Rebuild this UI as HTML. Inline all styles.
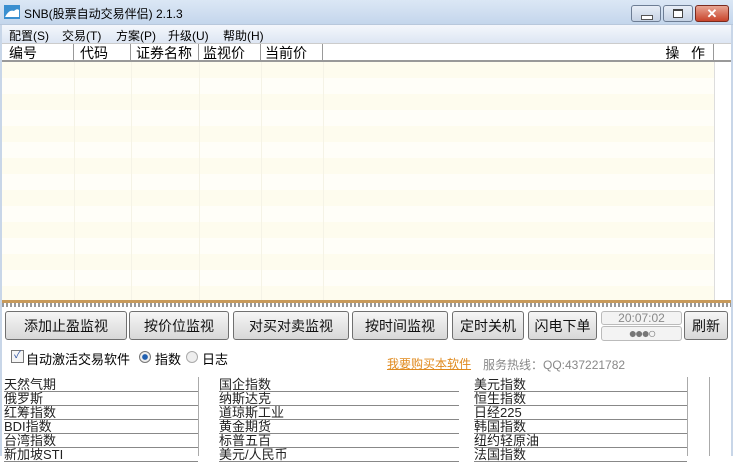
<!DOCTYPE html><html><head><meta charset="utf-8"><style>
body{margin:0;width:733px;height:456px;overflow:hidden;background:#fff;font-family:"Liberation Sans","Noto Sans CJK SC",sans-serif;font-size:12px;position:relative}
.a{position:absolute}
.btn{position:absolute;top:311px;height:29px;border:1px solid #707070;border-radius:3px;background:linear-gradient(#f6f6f6,#e6e6e6 50%,#d8d8d8);text-align:center;line-height:29px;font-size:14px;color:#111;box-sizing:border-box}
.col{position:absolute;top:44px;height:18px;border-right:1px solid #999;font-size:14px;line-height:18px;padding-left:6px;box-sizing:border-box}
.li{position:absolute;font-size:13px;line-height:13px;height:14px;border-bottom:1px solid #888;color:#222;box-sizing:border-box}
</style></head><body>
<div class="a" style="left:0;top:0;width:733px;height:24px;background:linear-gradient(#dbe7f5,#c4d6ec);border-bottom:1px solid #b8c8dc"></div>
<svg class="a" style="left:4px;top:5px" width="16" height="14"><rect width="16" height="14" fill="#3a8fd0"/><path d="M1 12 Q5 4 10 6 Q13 3 15 5 L15 12Z" fill="#fff"/></svg>
<div class="a" style="left:24px;top:5px;font-size:12px">SNB(股票自动交易伴侣) 2.1.3</div>
<div class="a" style="left:631px;top:5px;width:30px;height:17px;border:1px solid #6d7d94;border-radius:3px;background:linear-gradient(#e8eef7,#c5d2e4);box-sizing:border-box"><div class="a" style="left:9px;top:9px;width:10px;height:3px;background:#fff;border:1px solid #555"></div></div>
<div class="a" style="left:663px;top:5px;width:30px;height:17px;border:1px solid #6d7d94;border-radius:3px;background:linear-gradient(#e8eef7,#c5d2e4);box-sizing:border-box"><div class="a" style="left:9px;top:3px;width:8px;height:6px;border:1px solid #444;border-top-width:2px;background:#fff"></div></div>
<div class="a" style="left:695px;top:5px;width:34px;height:17px;border:1px solid #7a2a1e;border-radius:3px;background:linear-gradient(#e8a593,#c9442b);color:#fff;text-align:center;font-weight:bold;line-height:15px;font-size:13px;box-sizing:border-box">✕</div>
<div class="a" style="left:0;top:25px;width:733px;height:18px;background:linear-gradient(#f4f7fc,#dde6f3)"></div>
<div class="a" style="left:9px;top:27px">配置(S)</div>
<div class="a" style="left:62px;top:27px">交易(T)</div>
<div class="a" style="left:116px;top:27px">方案(P)</div>
<div class="a" style="left:168px;top:27px">升级(U)</div>
<div class="a" style="left:223px;top:27px">帮助(H)</div>
<div class="a" style="left:0;top:43px;width:733px;height:19px;background:#fff;border-bottom:2px solid #999;border-top:1px solid #ccc;box-sizing:border-box"></div>
<div class="col" style="left:2px;width:72px;padding-left:7px">编号</div>
<div class="col" style="left:74px;width:57px">代码</div>
<div class="col" style="left:131px;width:68px;padding-left:5px">证券名称</div>
<div class="col" style="left:199px;width:62px;padding-left:4px">监视价</div>
<div class="col" style="left:261px;width:62px;padding-left:4px">当前价</div>
<div class="col" style="left:323px;width:391px;text-align:right;padding-right:8px">操&nbsp;&nbsp;&nbsp;作</div>
<div class="a" style="left:2px;top:62px;width:712px;height:238px;background:repeating-linear-gradient(#fefcee 0 16px,#fffef8 16px 32px)"></div>
<div class="a" style="left:74px;top:62px;width:1px;height:238px;background:#f5f3e6"></div>
<div class="a" style="left:131px;top:62px;width:1px;height:238px;background:#f5f3e6"></div>
<div class="a" style="left:199px;top:62px;width:1px;height:238px;background:#f5f3e6"></div>
<div class="a" style="left:261px;top:62px;width:1px;height:238px;background:#f5f3e6"></div>
<div class="a" style="left:323px;top:62px;width:1px;height:238px;background:#f5f3e6"></div>
<div class="a" style="left:714px;top:62px;width:1px;height:238px;background:#ddd"></div>
<div class="a" style="left:0;top:25px;width:2px;height:431px;background:#c8d6e8"></div>
<div class="a" style="left:731px;top:25px;width:2px;height:431px;background:#c8d6e8"></div>
<div class="a" style="left:2px;top:300px;width:729px;height:3px;background:#c89a5a"></div>
<div class="a" style="left:2px;top:303px;width:729px;height:4px;background:repeating-linear-gradient(90deg,#999 0 2px,#fff 2px 4px)"></div>
<div class="btn" style="left:5px;width:122px">添加止盈监视</div>
<div class="btn" style="left:129px;width:100px">按价位监视</div>
<div class="btn" style="left:233px;width:116px">对买对卖监视</div>
<div class="btn" style="left:352px;width:96px">按时间监视</div>
<div class="btn" style="left:452px;width:72px">定时关机</div>
<div class="btn" style="left:528px;width:69px">闪电下单</div>
<div class="a" style="left:601px;top:311px;width:81px;height:14px;border:1px solid #bbb;border-radius:3px;background:#f3f3f3;color:#888;text-align:center;font-size:12px;line-height:13px;box-sizing:border-box">20:07:02</div>
<div class="a" style="left:601px;top:326px;width:81px;height:15px;border:1px solid #bbb;border-radius:3px;background:#f3f3f3;text-align:center;color:#777;font-size:14px;line-height:13px;box-sizing:border-box;letter-spacing:-2px">●●●○</div>
<div class="btn" style="left:684px;width:44px">刷新</div>
<div class="a" style="left:11px;top:350px;width:11px;height:11px;border:1px solid #777;background:#f5f5f5;font-size:10px;line-height:10px;color:#2a4fa0;text-align:center">✓</div>
<div class="a" style="left:26px;top:349px;font-size:13px">自动激活交易软件</div>
<div class="a" style="left:139px;top:351px;width:10px;height:10px;border-radius:50%;border:1px solid #777;background:radial-gradient(#1f5fb0 35%,#eee 45%)"></div>
<div class="a" style="left:155px;top:349px;font-size:13px">指数</div>
<div class="a" style="left:186px;top:351px;width:10px;height:10px;border-radius:50%;border:1px solid #aaa;background:#eee"></div>
<div class="a" style="left:202px;top:349px;font-size:13px">日志</div>
<div class="a" style="left:387px;top:355px;font-size:12px;color:#e08a1e;text-decoration:underline">我要购买本软件</div>
<div class="a" style="left:483px;top:356px;font-size:12px;color:#888">服务热线：QQ:437221782</div>
<div class="a" style="left:198px;top:377px;width:1px;height:79px;background:#aaa"></div>
<div class="a" style="left:687px;top:377px;width:1px;height:79px;background:#aaa"></div>
<div class="a" style="left:709px;top:377px;width:1px;height:79px;background:#aaa"></div>
<div class="li" style="left:4px;top:378px;width:194px">天然气期</div>
<div class="li" style="left:4px;top:392px;width:194px">俄罗斯</div>
<div class="li" style="left:4px;top:406px;width:194px">红筹指数</div>
<div class="li" style="left:4px;top:420px;width:194px">BDI指数</div>
<div class="li" style="left:4px;top:434px;width:194px">台湾指数</div>
<div class="li" style="left:4px;top:448px;width:194px">新加坡STI</div>
<div class="li" style="left:219px;top:378px;width:240px">国企指数</div>
<div class="li" style="left:219px;top:392px;width:240px">纳斯达克</div>
<div class="li" style="left:219px;top:406px;width:240px">道琼斯工业</div>
<div class="li" style="left:219px;top:420px;width:240px">黄金期货</div>
<div class="li" style="left:219px;top:434px;width:240px">标普五百</div>
<div class="li" style="left:219px;top:448px;width:240px">美元/人民币</div>
<div class="li" style="left:474px;top:378px;width:213px">美元指数</div>
<div class="li" style="left:474px;top:392px;width:213px">恒生指数</div>
<div class="li" style="left:474px;top:406px;width:213px">日经225</div>
<div class="li" style="left:474px;top:420px;width:213px">韩国指数</div>
<div class="li" style="left:474px;top:434px;width:213px">纽约轻原油</div>
<div class="li" style="left:474px;top:448px;width:213px">法国指数</div>
</body></html>
